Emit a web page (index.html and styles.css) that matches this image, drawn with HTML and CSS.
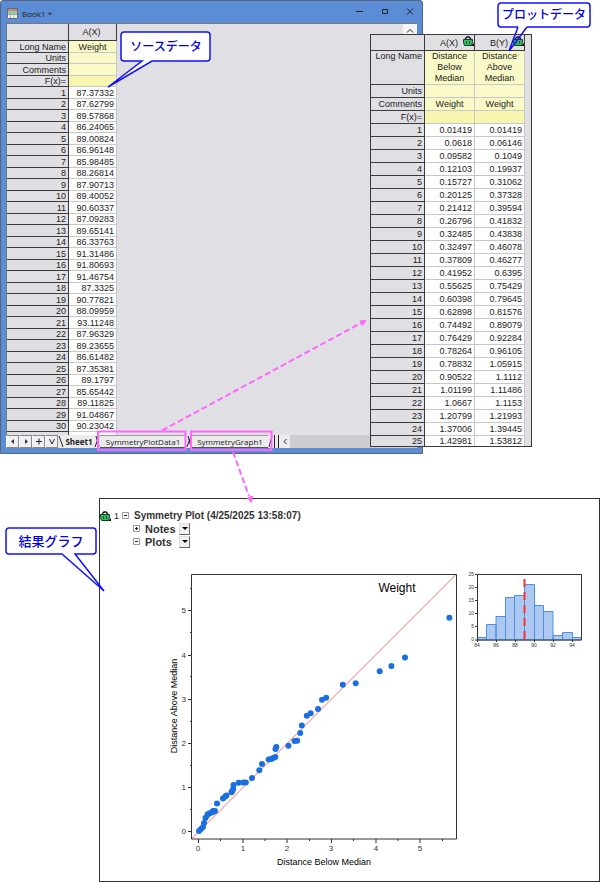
FILE: index.html
```html
<!DOCTYPE html>
<html lang="ja">
<head>
    <meta charset="UTF-8">
    <meta name="viewport" content="width=device-width, initial-scale=1.0">
    <title>Symmetry Plot</title>
    <link rel="stylesheet" href="styles.css">
</head>
<body>
    <!-- shared icons -->
    <svg class="defs" width="0" height="0" aria-hidden="true">
        <symbol id="lock" viewBox="0 0 11 10">
            <path d="M2.500 4V2.500L4 1h2l1.500 1.500V4" fill="none" stroke="#111" stroke-width="1.400"/>
            <path d="M.5 3.500h9v3l-1 3h-7l-1-3z" fill="#2fbf62" stroke="#1a3d28"/>
            <path d="M3.500 5v3M6.500 5v3" stroke="#1a5a30"/>
            <path d="M11 7v3H8z" fill="#000"/>
        </symbol>
    </svg>

    <main class="figure">
        <!-- Source workbook -->
        <section class="window">
            <header class="titlebar">
                <svg class="book-icon" width="11" height="11" viewBox="0 0 11 11">
                    <path d="M0 0h11v11H0z" fill="#f4f4f4"/>
                    <path d="M0 0h11v3H0z" fill="#e0707a"/>
                    <path d="M0 3h11v3H0z" fill="#8fd0a4"/>
                    <path d="M3.500 0v11M7 0v11M0 6.500h11" stroke="#9fb4a8" fill="none"/>
                    <path d="M.5.5h10v10H.5z" stroke="#6a6a72" fill="none"/>
                </svg>
                <span class="title">Book1 *</span>
                <button type="button" class="win-btn" aria-label="Minimize"><svg width="8" height="8" viewBox="0 0 8 8"><path d="M0 4.500h7"/></svg></button>
                <button type="button" class="win-btn" aria-label="Maximize"><svg width="8" height="8" viewBox="0 0 8 8"><path d="M1.500 2.500h5v4h-5z"/></svg></button>
                <button type="button" class="win-btn" aria-label="Close"><svg width="8" height="8" viewBox="0 0 8 8"><path d="M1 1.500l6 6M7 1.500l-6 6"/></svg></button>
            </header>
            <div class="sheet">
                <table class="grid source">
                    <thead>
                        <tr><th></th><th>A(X)</th></tr>
                    </thead>
                    <tbody>
                        <tr class="label"><th>Long Name</th><td>Weight</td></tr>
                        <tr class="label"><th>Units</th><td></td></tr>
                        <tr class="label"><th>Comments</th><td></td></tr>
                        <tr class="label formula"><th>F(x)=</th><td></td></tr>
                        <tr><th>1</th><td>87.37332</td></tr>
                        <tr><th>2</th><td>87.62799</td></tr>
                        <tr><th>3</th><td>89.57868</td></tr>
                        <tr><th>4</th><td>86.24065</td></tr>
                        <tr><th>5</th><td>89.00824</td></tr>
                        <tr><th>6</th><td>86.96148</td></tr>
                        <tr><th>7</th><td>85.98485</td></tr>
                        <tr><th>8</th><td>88.26814</td></tr>
                        <tr><th>9</th><td>87.90713</td></tr>
                        <tr><th>10</th><td>89.40052</td></tr>
                        <tr><th>11</th><td>90.60337</td></tr>
                        <tr><th>12</th><td>87.09283</td></tr>
                        <tr><th>13</th><td>89.65141</td></tr>
                        <tr><th>14</th><td>86.33763</td></tr>
                        <tr><th>15</th><td>91.31486</td></tr>
                        <tr><th>16</th><td>91.80693</td></tr>
                        <tr><th>17</th><td>91.46754</td></tr>
                        <tr><th>18</th><td>87.3325</td></tr>
                        <tr><th>19</th><td>90.77821</td></tr>
                        <tr><th>20</th><td>88.09959</td></tr>
                        <tr><th>21</th><td>93.11248</td></tr>
                        <tr><th>22</th><td>87.96329</td></tr>
                        <tr><th>23</th><td>89.23655</td></tr>
                        <tr><th>24</th><td>86.61482</td></tr>
                        <tr><th>25</th><td>87.35381</td></tr>
                        <tr><th>26</th><td>89.1797</td></tr>
                        <tr><th>27</th><td>85.65442</td></tr>
                        <tr><th>28</th><td>89.11825</td></tr>
                        <tr><th>29</th><td>91.04867</td></tr>
                        <tr><th>30</th><td>90.23042</td></tr>
                        <tr><th>31</th><td>90.65388</td></tr>
                    </tbody>
                </table>
                <button type="button" class="scroll-up" aria-label="Scroll up"><svg width="8" height="6" viewBox="0 0 8 6"><path d="M1 4.500l3-3 3 3"/></svg></button>
            </div>
            <footer class="tabbar">
                <button type="button" class="nav-btn" aria-label="Previous"><svg width="6" height="7" viewBox="0 0 6 7"><path class="solid" d="M4 1v5L1 3.500z"/></svg></button>
                <button type="button" class="nav-btn" aria-label="Next"><svg width="6" height="7" viewBox="0 0 6 7"><path class="solid" d="M2 1v5l3-2.500z"/></svg></button>
                <button type="button" class="nav-btn" aria-label="Add sheet"><svg width="6" height="7" viewBox="0 0 6 7"><path d="M0 3.500h6M3 .5v6"/></svg></button>
                <button type="button" class="nav-btn" aria-label="Sheet list"><svg width="6" height="7" viewBox="0 0 6 7"><path d="M.5 1L3 6l2.500-5"/></svg></button>
                <svg class="edge" width="6" height="13" viewBox="0 0 6 13"><path d="M1 1l4 11"/></svg>
                <button type="button" class="tab active">Sheet1</button>
                <svg class="edge" width="6" height="13" viewBox="0 0 6 13"><path d="M5 1L1 12M2 1l3 11"/></svg>
                <button type="button" class="tab plot-tab">SymmetryPlotData1</button>
                <svg class="edge" width="6" height="13" viewBox="0 0 6 13"><path d="M5 1L1 12M2 1l3 11"/></svg>
                <button type="button" class="tab graph-tab">SymmetryGraph1</button>
                <svg class="edge" width="12" height="13" viewBox="0 0 12 13"><path d="M4 1L1 12M6.500 0v13M10.500 0v13"/></svg>
                <button type="button" class="scroll-left" aria-label="Scroll left"><svg width="6" height="7" viewBox="0 0 6 7"><path d="M4.500 1L2 3.500 4.500 6"/></svg></button>
                <span class="track"></span>
            </footer>
        </section>

        <!-- Computed plot data -->
        <section class="plot-data">
            <table class="grid">
                <thead>
                    <tr>
                        <th></th>
                        <th>A(X)<svg class="lock" width="11" height="10"><use href="#lock"/></svg></th>
                        <th>B(Y)<svg class="lock" width="11" height="10"><use href="#lock"/></svg></th>
                    </tr>
                </thead>
                <tbody>
                    <tr class="label long"><th>Long Name</th><td>Distance<br>Below<br>Median</td><td>Distance<br>Above<br>Median</td></tr>
                    <tr class="label"><th>Units</th><td></td><td></td></tr>
                    <tr class="label"><th>Comments</th><td>Weight</td><td>Weight</td></tr>
                    <tr class="label formula"><th>F(x)=</th><td></td><td></td></tr>
                    <tr><th>1</th><td>0.01419</td><td>0.01419</td></tr>
                    <tr><th>2</th><td>0.0618</td><td>0.06146</td></tr>
                    <tr><th>3</th><td>0.09582</td><td>0.1049</td></tr>
                    <tr><th>4</th><td>0.12103</td><td>0.19937</td></tr>
                    <tr><th>5</th><td>0.15727</td><td>0.31062</td></tr>
                    <tr><th>6</th><td>0.20125</td><td>0.37328</td></tr>
                    <tr><th>7</th><td>0.21412</td><td>0.39594</td></tr>
                    <tr><th>8</th><td>0.26796</td><td>0.41832</td></tr>
                    <tr><th>9</th><td>0.32485</td><td>0.43838</td></tr>
                    <tr><th>10</th><td>0.32497</td><td>0.46078</td></tr>
                    <tr><th>11</th><td>0.37809</td><td>0.46277</td></tr>
                    <tr><th>12</th><td>0.41952</td><td>0.6395</td></tr>
                    <tr><th>13</th><td>0.55625</td><td>0.75429</td></tr>
                    <tr><th>14</th><td>0.60398</td><td>0.79645</td></tr>
                    <tr><th>15</th><td>0.62898</td><td>0.81576</td></tr>
                    <tr><th>16</th><td>0.74492</td><td>0.89079</td></tr>
                    <tr><th>17</th><td>0.76429</td><td>0.92284</td></tr>
                    <tr><th>18</th><td>0.78264</td><td>0.96105</td></tr>
                    <tr><th>19</th><td>0.78832</td><td>1.05915</td></tr>
                    <tr><th>20</th><td>0.90522</td><td>1.1112</td></tr>
                    <tr><th>21</th><td>1.01199</td><td>1.11486</td></tr>
                    <tr><th>22</th><td>1.0667</td><td>1.1153</td></tr>
                    <tr><th>23</th><td>1.20799</td><td>1.21993</td></tr>
                    <tr><th>24</th><td>1.37006</td><td>1.39445</td></tr>
                    <tr class="last"><th>25</th><td>1.42981</td><td>1.53812</td></tr>
                </tbody>
            </table>
        </section>

        <!-- Result report -->
        <section class="report">
            <div class="tree">
                <div class="node root">
                    <svg class="lock" width="11" height="10"><use href="#lock"/></svg>
                    <span class="index">1</span>
                    <svg class="toggle" width="7" height="7" viewBox="0 0 7 7"><path class="box" d="M.5.5h6v6h-6z"/><path d="M2 3.500h3"/></svg>
                    <h1>Symmetry Plot (4/25/2025 13:58:07)</h1>
                </div>
                <div class="node">
                    <svg class="toggle" width="7" height="7" viewBox="0 0 7 7"><path class="box" d="M.5.5h6v6h-6z"/><path d="M2 3.500h3M3.500 2v3"/></svg>
                    <h2>Notes</h2>
                    <button type="button" class="drop" aria-label="Notes menu"></button>
                </div>
                <div class="node">
                    <svg class="toggle" width="7" height="7" viewBox="0 0 7 7"><path class="box" d="M.5.5h6v6h-6z"/><path d="M2 3.500h3"/></svg>
                    <h2>Plots</h2>
                    <button type="button" class="drop" aria-label="Plots menu"></button>
                </div>
            </div>
            <div class="charts">
                <svg class="scatter" width="295" height="300" viewBox="165 570 295 300">
                    <path class="ref-line" d="M191.500 839L456.500 574"/>
                    <path class="axis" d="M191.500 574.500h265v264.500h-265z"/>
                    <path class="axis" d="M198.500 839v4M243 839v4M287 839v4M331.500 839v4M376 839v4M420 839v4M220.500 839v2M265 839v2M309.500 839v2M353.500 839v2M398 839v2M442.500 839v2"/>
                    <path class="axis" d="M188 831.500h4M188 787.500h4M188 743.500h4M188 699.500h4M188 655.500h4M188 610.500h4M190 809.500h2M190 765.500h2M190 721.500h2M190 676.500h2M190 632.500h2M190 588.500h2"/>
                    <g class="ticks x">
                        <text x="198" y="851">0</text><text x="243" y="851">1</text><text x="287" y="851">2</text>
                        <text x="331" y="851">3</text><text x="376" y="851">4</text><text x="420" y="851">5</text>
                    </g>
                    <g class="ticks y">
                        <text x="186" y="834">0</text><text x="186" y="790">1</text><text x="186" y="746">2</text>
                        <text x="186" y="702">3</text><text x="186" y="658">4</text><text x="186" y="613">5</text>
                    </g>
                    <text class="axis-title" x="324" y="865">Distance Below Median</text>
                    <text class="axis-title" transform="translate(177 706) rotate(-90)">Distance Above Median</text>
                    <text class="chart-title" x="397" y="592">Weight</text>
                    <g class="dots">
                        <circle cx="199" cy="831" r="3"/><circle cx="201" cy="829" r="3"/><circle cx="203" cy="827" r="3"/>
                        <circle cx="204" cy="823" r="3"/><circle cx="205.500" cy="818" r="3"/><circle cx="207.400" cy="815" r="3"/>
                        <circle cx="208" cy="814" r="3"/><circle cx="210.400" cy="813" r="3"/><circle cx="213" cy="812" r="3"/>
                        <circle cx="213" cy="811" r="3"/><circle cx="215" cy="811" r="3"/><circle cx="217" cy="803.500" r="3"/>
                        <circle cx="223" cy="798.500" r="3"/><circle cx="225.300" cy="796.400" r="3"/><circle cx="226.400" cy="795.500" r="3"/>
                        <circle cx="231.500" cy="792.200" r="3"/><circle cx="232.400" cy="790.800" r="3"/><circle cx="233.200" cy="789" r="3"/>
                        <circle cx="233.500" cy="785" r="3"/><circle cx="238.600" cy="782.700" r="3"/><circle cx="243.300" cy="782.500" r="3"/>
                        <circle cx="245.800" cy="782.500" r="3"/><circle cx="252" cy="778" r="3"/><circle cx="259.300" cy="770.300" r="3"/>
                        <circle cx="262" cy="764" r="3"/><circle cx="268.700" cy="759.400" r="3"/><circle cx="271.300" cy="759" r="3"/>
                        <circle cx="273" cy="758" r="3"/><circle cx="275.300" cy="757" r="3"/><circle cx="275.500" cy="749" r="3"/>
                        <circle cx="276.300" cy="747" r="3"/><circle cx="288.400" cy="745.700" r="3"/><circle cx="294.500" cy="741" r="3"/>
                        <circle cx="297.200" cy="740.700" r="3"/><circle cx="300.200" cy="733" r="3"/><circle cx="301.800" cy="725.500" r="3"/>
                        <circle cx="306.800" cy="715.800" r="3"/><circle cx="310.700" cy="713.200" r="3"/><circle cx="318" cy="709" r="3"/>
                        <circle cx="322" cy="699.800" r="3"/><circle cx="326.200" cy="697.800" r="3"/><circle cx="342.800" cy="684.800" r="3"/>
                        <circle cx="355.700" cy="683.200" r="3"/><circle cx="379.700" cy="671.300" r="3"/><circle cx="391.400" cy="666" r="3"/>
                        <circle cx="405" cy="657.600" r="3"/><circle cx="449.400" cy="617.700" r="3"/>
                    </g>
                </svg>
                <svg class="histogram" width="120" height="80" viewBox="466 570 120 80">
                    <path class="bars" d="M477.500 637.500h9V640h-9zM486.500 624.500h9.500V640h-9.500zM496 616.500h9.500V640H496zM505.500 597.500h9V640h-9zM514.500 595.500h10V640h-10zM524.500 584.500h10V640h-10zM534.500 605.500h9V640h-9zM543.500 611.500h9.500V640h-9.500zM553 635.500h9.500V640H553zM562.500 632.500h10V640h-10zM572.500 637.500h9V640h-9z"/>
                    <path class="axis" d="M477.500 574.500h104V640h-104z"/>
                    <path class="axis" d="M475 574.500h2M475 587.500h2M475 600.500h2M475 613.500h2M475 626.500h2M475 640h2M477.500 640v2M496.500 640v2M515.500 640v2M534.500 640v2M553.500 640v2M572.500 640v2"/>
                    <path class="median" d="M524.500 579v61"/>
                    <g class="ticks y">
                        <text x="474" y="576">25</text><text x="474" y="589">20</text><text x="474" y="602">15</text>
                        <text x="474" y="615">10</text><text x="474" y="628">5</text><text x="474" y="641">0</text>
                    </g>
                    <g class="ticks x">
                        <text x="477" y="647">84</text><text x="496" y="647">86</text><text x="515" y="647">88</text>
                        <text x="534" y="647">90</text><text x="553" y="647">92</text><text x="572" y="647">94</text>
                    </g>
                </svg>
            </div>
        </section>

        <!-- Annotations -->
        <svg class="arrows" width="372" height="510" viewBox="0 0 372 510">
            <path class="frame" d="M98 431.500h87.500v18.500H98zM191 431.500h80.500v18.500H191z"/>
            <path class="dash" d="M162 430.500L361 323M233 452l16 44"/>
            <path class="head" d="M366 320.500l-6 .5 2.500 4.500zM251.500 502.500l1-6.500-5 2z"/>
        </svg>
        <svg class="callout source-note" width="108" height="60" viewBox="0 0 108 60">
            <path d="M19 1h82a3 3 0 0 1 3 3v23a3 3 0 0 1-3 3H46L2 56 36 30H18a3 3 0 0 1-3-3V4a3 3 0 0 1 3-3z"/>
            <text x="60" y="20">ソースデータ</text>
        </svg>
        <svg class="callout plot-note" width="94" height="52" viewBox="0 0 94 52">
            <path d="M30 25h60a3 3 0 0 0 3-3V4a3 3 0 0 0-3-3H4a3 3 0 0 0-3 3v18a3 3 0 0 0 3 3h17"/>
            <path class="tail" d="M30 25L12 49l9-24"/>
            <text x="47" y="17">プロットデータ</text>
        </svg>
        <svg class="callout result-note" width="102" height="66" viewBox="0 0 102 66">
            <path d="M4 1h84a3 3 0 0 1 3 3v20a3 3 0 0 1-3 3H70l29 37L57 27H4a3 3 0 0 1-3-3V4a3 3 0 0 1 3-3z"/>
            <text class="large" x="46" y="19">結果グラフ</text>
        </svg>
    </main>
</body>
</html>
```

FILE: styles.css
```css
:root {
    --frame: #5b8dd6;
    --sheet-bg: #e0dfe4;
    --line: #3a3a3a;
    --cell-line: #c8c8c8;
    --label-bg: #fafac8;
    --formula-bg: #f6f6ae;
    --dot: #1a6fe0;
    --note: #1010ff;
    --mark: #ff66ff;
}

body {
    margin: 0;
    background: #fff;
    color: #222;
    font-family: "Liberation Sans", Arial, sans-serif;
    font-size: 9px;
}

button {
    margin: 0;
    padding: 0;
    border: 0;
    background: none;
    font: inherit;
    color: inherit;
}

svg {
    display: block;
    flex: none;
}

.defs {
    position: absolute;
}

.figure {
    position: relative;
}

/* Workbook window */
.window {
    box-sizing: border-box;
    width: calc(100% - 177px);
    border: 1px solid #56647c;
    border-radius: 3px 3px 0 0;
    background: var(--frame);
    padding: 0 5px 5px;
}

.titlebar {
    display: flex;
    align-items: center;
    height: 22px;
    padding-left: 1px;
    padding-top: 2px;
    box-sizing: border-box;
    font-family: "Open Sans", sans-serif;
    font-size: 8px;
}

.title {
    flex: 1;
    padding-left: 4px;
}

.win-btn {
    display: flex;
    justify-content: center;
    width: 25px;
    padding-bottom: 4px;
}

.win-btn svg {
    margin-left: 10px;
}

.win-btn svg,
.nav-btn svg,
.scroll-up svg,
.scroll-left svg {
    fill: none;
    stroke: #222;
}

.sheet {
    display: flex;
    justify-content: space-between;
    align-items: flex-start;
    height: 411px;
    overflow: hidden;
    border-top: 1px solid #777;
    background: var(--sheet-bg);
}

.scroll-up {
    display: flex;
    justify-content: center;
    align-items: center;
    width: 14px;
    height: 14px;
    background: #f4f4f4;
}

/* Worksheet grids */
.grid {
    table-layout: fixed;
    border-collapse: separate;
    border-spacing: 0;
    width: 154px;
    line-height: 10px;
}

.grid th,
.grid td {
    box-sizing: border-box;
    height: 13px;
    padding: 0 2px 0 0;
    font-weight: normal;
    text-align: right;
    border-right: 1px solid var(--cell-line);
    border-bottom: 1px solid var(--cell-line);
    white-space: nowrap;
}

.grid th {
    border-color: var(--line);
    background: var(--sheet-bg);
}

.grid td {
    background: #fff;
}

.grid thead th {
    height: 16px;
    text-align: center;
}

.grid thead th:first-child {
    width: 54px;
}

.grid .label td {
    padding: 0;
    text-align: center;
    background: var(--label-bg);
}

.grid .formula td {
    background: var(--formula-bg);
}

.grid .long th,
.grid .long td {
    height: 34px;
    line-height: 11px;
    vertical-align: top;
}

.grid .last th,
.grid .last td {
    height: 10px;
    border-bottom: 0;
}

.source {
    width: 111px;
    border-left: 1px solid #777;
}

.source thead th {
    height: 17px;
}

.source thead th:first-child {
    width: 62px;
}

.source tbody th,
.source tbody td {
    height: 11px;
}

.source tbody tr:nth-child(odd) > * {
    height: 12px;
}

.grid .lock {
    display: inline-block;
    margin: -4px 0 0 5px;
    vertical-align: middle;
}

.grid thead th:has(.lock) {
    padding: 0;
    text-align: right;
}

/* Sheet tabs */
.tabbar {
    display: flex;
    align-items: stretch;
    height: 13px;
    background: #ececec;
    font-family: "Open Sans", sans-serif;
    font-size: 8px;
}

.nav-btn {
    display: flex;
    align-items: center;
    justify-content: center;
    box-sizing: border-box;
    width: 13px;
    border: 1px solid #888;
    border-left-color: #f8f8f8;
    background: #f0f0f0;
}

.nav-btn .solid {
    fill: #333;
    stroke: none;
}

.edge {
    fill: none;
    stroke: #222;
}

.tab {
    box-sizing: border-box;
    border-bottom: 1px solid #555;
    border-top: 1px solid #999;
    line-height: 11px;
}

.tab.active {
    width: 30px;
    border-color: transparent;
    font-weight: bold;
}

.plot-tab {
    width: 86px;
}

.graph-tab {
    width: 76px;
}

.scroll-left {
    display: flex;
    align-items: center;
    justify-content: center;
    width: 10px;
}

.track {
    flex: 1;
    background: #cdcdcd;
}

/* Plot data sheet, lies over the workbook */
.plot-data {
    position: absolute;
    top: 34px;
    right: 68px;
    box-sizing: border-box;
    width: 162px;
    border: 1px solid var(--line);
    background: var(--sheet-bg);
}

/* Report */
.report {
    margin: 44px 0 0 99px;
    border: 1px solid #333;
    padding-bottom: 11px;
}

.tree {
    height: 61px;
    padding-top: 10px;
}

.node {
    display: flex;
    align-items: center;
    height: 13px;
    padding-left: 33px;
}

.node.root {
    padding-left: 0;
}

.node h1,
.node h2 {
    margin: 0;
    padding-left: 5px;
    font-size: 10px;
    color: #333;
}

.node h2 {
    width: 34px;
    font-size: 11px;
}

.index {
    width: 8px;
    padding-left: 3px;
}

.toggle {
    fill: none;
    stroke: #222;
}

.toggle .box {
    stroke: #999;
}

.drop {
    display: flex;
    align-items: center;
    justify-content: center;
    box-sizing: border-box;
    width: 11px;
    height: 12px;
    border: 1px solid #ddd;
    border-right-color: #666;
    border-bottom-color: #666;
    background: #f0f0f0;
}

.drop::after {
    content: "";
    border: 3px solid transparent;
    border-top-color: #000;
    border-bottom: 0;
}

.charts {
    display: flex;
    align-items: flex-start;
    gap: 6px;
    padding-left: 65px;
}

.axis {
    fill: none;
    stroke: #333;
}

.ref-line {
    stroke: #ff7070;
}

.dots {
    fill: var(--dot);
}

.ticks {
    font-size: 8px;
    fill: #333;
}

.ticks.x,
.axis-title,
.chart-title {
    text-anchor: middle;
}

.ticks.y {
    text-anchor: end;
}

.axis-title {
    font-size: 9px;
}

.chart-title {
    font-size: 12px;
}

.histogram .ticks {
    font-size: 5px;
}

.bars {
    fill: #adc9f1;
    stroke: #4a90e6;
}

.median {
    stroke: #ff3030;
    stroke-width: 2;
    stroke-dasharray: 8 5;
}

/* Annotations */
.arrows {
    position: absolute;
    top: 0;
    left: 0;
    fill: none;
    stroke: var(--mark);
    pointer-events: none;
}

.arrows .frame,
.arrows .dash {
    stroke-width: 2;
}

.arrows .dash {
    stroke-dasharray: 6 3;
}

.arrows .head {
    fill: var(--mark);
}

.callout {
    position: absolute;
    fill: #fff;
    stroke: var(--note);
    stroke-width: 1.5;
}

.callout .tail {
    fill: none;
}

.callout text {
    font-family: "Liberation Sans", "Noto Sans CJK JP", sans-serif;
    font-size: 12px;
    font-weight: 500;
    text-anchor: middle;
    fill: #0000e0;
    stroke: none;
}

.callout .large {
    font-size: 13px;
}

.source-note {
    top: 31px;
    left: 106px;
}

.plot-note {
    top: 2px;
    right: 9px;
}

.result-note {
    top: 527px;
    left: 5px;
}
```
